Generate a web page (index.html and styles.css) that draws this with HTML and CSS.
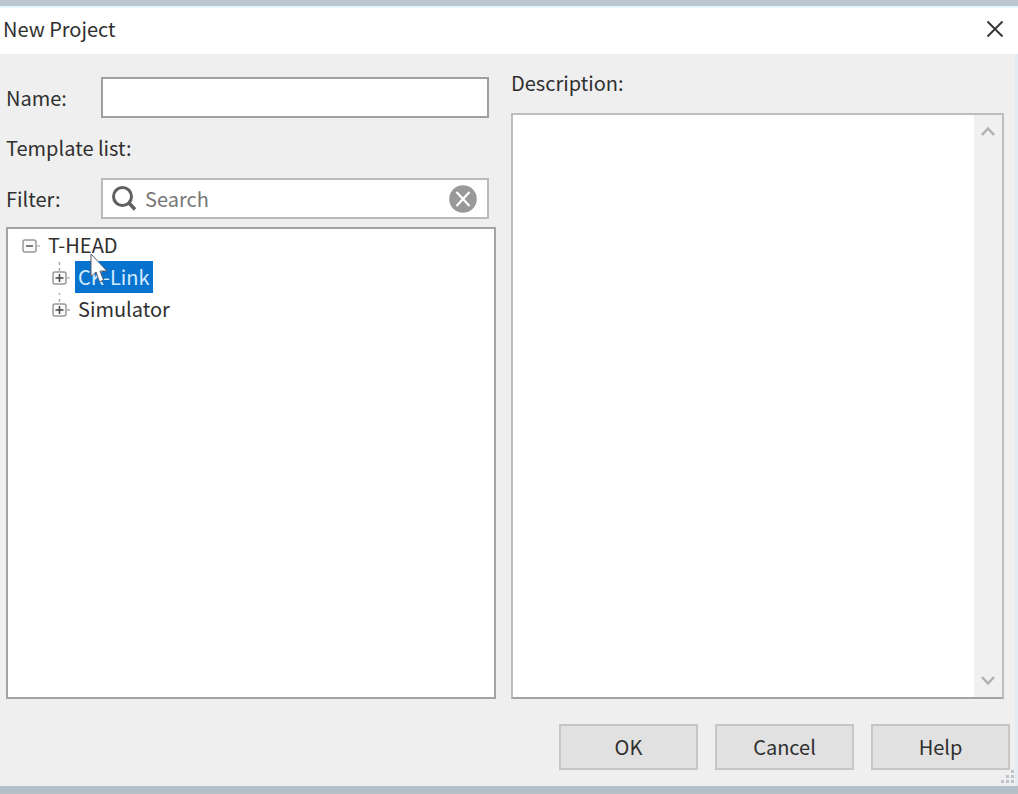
FILE: index.html
```html
<!DOCTYPE html>
<html lang="en">
<head>
<meta charset="utf-8">
<title>New Project</title>
<link rel="stylesheet" href="styles.css">
</head>
<body>
<main class="dialog" role="dialog" aria-labelledby="dialog-title">
  <header class="titlebar">
    <h1 class="title" id="dialog-title">New Project</h1>
    <button class="close" type="button" aria-label="Close">
      <svg width="18" height="18" viewBox="0 0 18 18"><path d="M1.5 1.5 16.5 16.5M16.5 1.5 1.5 16.5" fill="none" stroke="#333" stroke-width="1.8"/></svg>
    </button>
  </header>
  <form class="content">
    <div class="columns">
      <section class="left">
        <div class="field">
          <label for="name">Name:</label>
          <input class="box name" id="name" type="text">
        </div>
        <p class="list-label" id="list-label">Template list:</p>
        <div class="field">
          <label for="filter">Filter:</label>
          <div class="box search">
            <svg width="26" height="26" viewBox="0 0 26 26"><circle cx="11.500" cy="10.500" r="9" fill="none" stroke="#606060" stroke-width="3"/><path d="M18 17 24 23.500" stroke="#606060" stroke-width="3.500"/></svg>
            <input class="search-input" id="filter" type="text" placeholder="Search">
            <button class="clear" type="button" aria-label="Clear filter">
              <svg width="28" height="28" viewBox="0 0 28 28"><circle cx="14" cy="14" r="13.800" fill="#999"/><path d="M7.500 7 20.500 21M20.500 7 7.500 21" stroke="#fff" stroke-width="2.300"/></svg>
            </button>
          </div>
        </div>
        <ul class="tree" role="tree" aria-labelledby="list-label">
          <li role="treeitem" aria-expanded="true">
            <div class="row">
              <button class="toggle" type="button" aria-label="Collapse T-HEAD">
                <svg width="20" height="32" viewBox="0 0 20 32"><rect x="2" y="11" width="13" height="12" rx="2" fill="#fafafa" stroke="#999" stroke-width="1.500"/><path d="M5 17H12" stroke="#555" stroke-width="1.500"/><path d="M16 17H19" stroke="#bbb" stroke-width="1.500"/></svg>
              </button>
              <span class="node">T-HEAD</span>
              <svg class="pointer" width="20" height="32" viewBox="0 0 20 32"><path d="M2 1V23.500L7 19 10.500 29 14.500 27 11 18H18Z" fill="#fff" stroke="#555b66" stroke-width="1"/></svg>
            </div>
            <ul class="branch" role="group">
              <li role="treeitem" aria-expanded="false" aria-selected="true">
                <div class="row">
                  <button class="toggle" type="button" aria-label="Expand CK-Link">
                    <svg width="20" height="32" viewBox="0 0 20 32"><path d="M8.500 1V4M8.500 7V10" stroke="#aaa" stroke-width="1.500"/><rect x="2" y="11" width="13" height="12" rx="2" fill="#fafafa" stroke="#999" stroke-width="1.500"/><path d="M4.500 17H12.500M8.500 13V21" stroke="#444" stroke-width="1.500"/><path d="M16 17H19" stroke="#bbb" stroke-width="1.500"/></svg>
                  </button>
                  <span class="node selected">CK-Link</span>
                </div>
              </li>
              <li role="treeitem" aria-expanded="false">
                <div class="row">
                  <button class="toggle" type="button" aria-label="Expand Simulator">
                    <svg width="20" height="32" viewBox="0 0 20 32"><path d="M8.500 0V2M8.500 6V9" stroke="#aaa" stroke-width="1.500"/><rect x="2" y="11" width="13" height="12" rx="2" fill="#fafafa" stroke="#999" stroke-width="1.500"/><path d="M4.500 17H12.500M8.500 13V21" stroke="#444" stroke-width="1.500"/><path d="M16 17H19" stroke="#aaa" stroke-width="1.500"/></svg>
                  </button>
                  <span class="node">Simulator</span>
                </div>
              </li>
            </ul>
          </li>
        </ul>
      </section>
      <section class="right">
        <label for="description">Description:</label>
        <div class="description">
          <textarea class="description-text" id="description" readonly></textarea>
          <div class="scrollbar">
            <button class="arrow" type="button" aria-label="Scroll up"><svg width="14" height="12" viewBox="0 0 14 12"><path d="M1 10 7 3.500 13 10" fill="none" stroke="#b0b0b0" stroke-width="2.500"/></svg></button>
            <button class="arrow" type="button" aria-label="Scroll down"><svg width="14" height="12" viewBox="0 0 14 12"><path d="M1 2 7 8.500 13 2" fill="none" stroke="#b0b0b0" stroke-width="2.500"/></svg></button>
          </div>
        </div>
      </section>
    </div>
    <footer class="actions">
      <button class="action" type="button">OK</button>
      <button class="action" type="button">Cancel</button>
      <button class="action" type="button">Help</button>
    </footer>
    <svg class="grip" width="14" height="14" viewBox="0 0 14 14"><path d="M10 0h3v3h-3zM5 5h3v3h-3zM10 5h3v3h-3zM0 10h3v3h-3zM5 10h3v3h-3zM10 10h3v3h-3z" fill="#bfc3c7"/></svg>
  </form>
</main>
</body>
</html>
```
FILE: styles.css
```css
* {
  box-sizing: border-box;
}

body {
  margin: 0;
  background: #efefef;
  color: #303030;
  font: 20px/24px "Noto Sans CJK SC", "Noto Sans", sans-serif;
}

button,
input,
textarea {
  margin: 0;
  padding: 0;
  border: 0;
  background: none;
  color: inherit;
  font: inherit;
}

svg {
  display: block;
  flex: none;
}

.dialog {
  display: flex;
  flex-direction: column;
  min-height: 100vh;
  border-top: 6px solid #bcc7d1;
  border-bottom: 8px solid #b4bfc8;
}

.titlebar {
  display: flex;
  align-items: center;
  justify-content: space-between;
  height: 48px;
  padding: 0 14px 4px 3px;
  border-top: 2px solid #e6f6fd;
  background: #fff;
}

.title {
  margin: 0;
  font-size: 20px;
  font-weight: 400;
}

.content {
  position: relative;
  display: flex;
  flex: 1;
  flex-direction: column;
  border-right: 3px solid #e3ebf2;
}

.columns {
  display: grid;
  flex: 1;
  grid-template-columns: 490fr 493fr;
  gap: 15px;
  padding: 17px 11px 0 6px;
}

.left,
.right {
  display: flex;
  flex-direction: column;
  min-width: 0;
}

.left {
  padding-top: 6px;
}

.field {
  display: grid;
  grid-template-columns: 95px 1fr;
  align-items: center;
  padding-right: 7px;
}

.box {
  width: 100%;
  height: 41px;
  border: 2px solid #a0a0a0;
  background: #fff;
}

.name {
  padding: 0 8px;
}

.list-label {
  margin: 18px 0;
}

.search {
  display: flex;
  align-items: center;
  gap: 8px;
  padding: 0 10px 0 8px;
  border-color: #bababa;
}

.search-input {
  flex: 1;
  min-width: 0;
  outline: 0;
}

.search-input::placeholder {
  color: #777;
  opacity: 1;
}

.tree {
  flex: 1;
  margin: 8px 0 0;
  padding: 0 0 0 13px;
  border: 2px solid #a3a3a3;
  background: #fff;
  list-style: none;
}

.branch {
  margin: 0;
  padding: 0 0 0 30px;
  list-style: none;
}

.row {
  position: relative;
  display: flex;
  align-items: center;
  height: 32px;
  gap: 4px;
}

.node {
  padding: 4px 3px;
}

.selected {
  background: #0873cf;
  color: #d5ecff;
}

.pointer {
  position: absolute;
  z-index: 1;
  top: 24px;
  left: 68px;
}

.right {
  gap: 18px;
}

.description {
  display: flex;
  flex: 1;
  border: 2px solid #bdbdbd;
  border-bottom-color: #a3a3a3;
  background: #fff;
}

.description-text {
  flex: 1;
  min-width: 0;
  padding: 8px;
  outline: 0;
  resize: none;
}

.scrollbar {
  display: flex;
  flex-direction: column;
  justify-content: space-between;
  width: 28px;
  background: #f0f0f0;
}

.arrow {
  display: flex;
  align-items: center;
  justify-content: center;
  height: 32px;
}

.actions {
  display: flex;
  justify-content: flex-end;
  gap: 17px;
  padding: 25px 5px 16px;
}

.action {
  width: 139px;
  height: 46px;
  border: 2px solid #c6c6c6;
  background: #e1e1e1;
}

.grip {
  position: absolute;
  right: 0;
  bottom: 2px;
}
```
